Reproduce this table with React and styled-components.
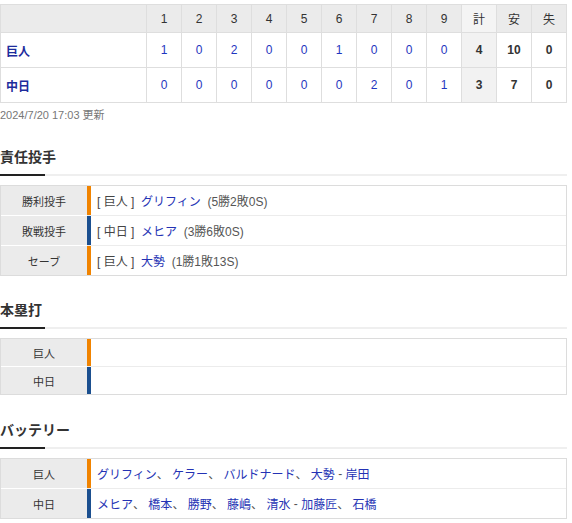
import React from 'react';
import styled, { createGlobalStyle } from 'styled-components';

const GlobalStyle = createGlobalStyle`
  body {
    margin: 0;
    background: #fff;
    font-family: "Liberation Sans", Arial, "Noto Sans CJK JP", sans-serif;
    color: #333;
  }
`;

const Page = styled.div`
  width: 567px;
  padding-top: 4px;
`;

const Score = styled.table`
  width: 567px;
  border-collapse: collapse;
  table-layout: fixed;
  font-size: 12px;
`;

const HeadCell = styled.th`
  height: 27px;
  padding: 0;
  border: 1px solid #dedede;
  background: ${(p) => (p.total ? '#f4f4f4' : '#ebebeb')};
  font-weight: normal;
  color: #333;
  text-align: center;
  width: ${(p) => (p.wide ? '145px' : 'auto')};
`;

const TeamCell = styled.td`
  height: 34px;
  padding: 0 0 0 5px;
  border: 1px solid #dedede;
  font-weight: bold;
  color: #1d2c9c;
`;

const RunCell = styled.td`
  padding: 0;
  border: 1px solid #dedede;
  text-align: center;
  color: #1f35c0;
`;

const TotalCell = styled.td`
  padding: 0;
  border: 1px solid #dedede;
  text-align: center;
  font-weight: bold;
  color: #333;
  background: ${(p) => (p.total ? '#f2f2f2' : '#fff')};
`;

const Stamp = styled.div`
  margin-top: 4px;
  font-size: 11px;
  line-height: 16px;
  color: #777;
`;

const Heading = styled.h2`
  position: relative;
  margin: ${(p) => p.space || 24}px 0 9px;
  padding-bottom: 7px;
  font-size: 14px;
  line-height: 20px;
  font-weight: bold;
  color: #333;
  border-bottom: 2px solid #efefef;
  &::after {
    content: '';
    position: absolute;
    left: 0;
    bottom: -2px;
    width: 45px;
    height: 2px;
    background: #222;
  }
`;

const Box = styled.div`
  border: 1px solid #dcdcdc;
`;

const Row = styled.div`
  display: flex;
  height: ${(p) => p.h || 29}px;
`;

const Label = styled.div`
  width: 86px;
  flex: none;
  display: flex;
  align-items: center;
  justify-content: center;
  background: #ebebeb;
  font-size: 11px;
  color: #333;
`;

const Value = styled.div`
  flex: 1;
  display: flex;
  align-items: center;
  padding-left: 6px;
  border-left: 4px solid ${(p) => p.color};
  font-size: 12px;
  color: #555;
  white-space: pre;
`;

const Divider = styled.div`
  height: 1px;
  background: #ececec;
  margin-left: 86px;
`;

const Name = styled.span`
  color: #2432b4;
`;

const Team = styled.span`
  color: #444;
`;

const Stat = styled.span`
  color: #555;
`;

const ORANGE = '#f08300';
const BLUE = '#1b4f8f';

const scores = [
  { team: '巨人', runs: [1, 0, 2, 0, 0, 1, 0, 0, 0], r: 4, h: 10, e: 0 },
  { team: '中日', runs: [0, 0, 0, 0, 0, 0, 2, 0, 1], r: 3, h: 7, e: 0 },
];

const pitchers = [
  { label: '勝利投手', team: '巨人', name: 'グリフィン', stat: '(5勝2敗0S)', color: ORANGE },
  { label: '敗戦投手', team: '中日', name: 'メヒア', stat: '(3勝6敗0S)', color: BLUE },
  { label: 'セーブ', team: '巨人', name: '大勢', stat: '(1勝1敗13S)', color: ORANGE },
];

const battery = [
  { team: '巨人', pitchers: ['グリフィン', 'ケラー', 'バルドナード', '大勢'], catchers: ['岸田'], color: ORANGE },
  { team: '中日', pitchers: ['メヒア', '橋本', '勝野', '藤嶋', '清水'], catchers: ['加藤匠', '石橋'], color: BLUE },
];

const NameList = ({ names }) => names.map((n, i) => (
  <React.Fragment key={n}>
    {i > 0 && <Stat>{'、 '}</Stat>}
    <Name>{n}</Name>
  </React.Fragment>
));

const App = () => (
  <Page>
    <GlobalStyle />
    <Score>
      <thead>
        <tr>
          <HeadCell wide />
          {[1, 2, 3, 4, 5, 6, 7, 8, 9].map((n) => <HeadCell key={n}>{n}</HeadCell>)}
          <HeadCell total>計</HeadCell>
          <HeadCell>安</HeadCell>
          <HeadCell>失</HeadCell>
        </tr>
      </thead>
      <tbody>
        {scores.map((s) => (
          <tr key={s.team}>
            <TeamCell>{s.team}</TeamCell>
            {s.runs.map((r, i) => <RunCell key={i}>{r}</RunCell>)}
            <TotalCell total>{s.r}</TotalCell>
            <TotalCell>{s.h}</TotalCell>
            <TotalCell>{s.e}</TotalCell>
          </tr>
        ))}
      </tbody>
    </Score>
    <Stamp>2024/7/20 17:03 更新</Stamp>

    <Heading>責任投手</Heading>
    <Box>
      {pitchers.map((p, i) => (
        <React.Fragment key={p.label}>
          {i > 0 && <Divider />}
          <Row>
            <Label>{p.label}</Label>
            <Value color={p.color}>
              <Team>{`[ ${p.team} ]  `}</Team>
              <Name>{p.name}</Name>
              <Stat>{`  ${p.stat}`}</Stat>
            </Value>
          </Row>
        </React.Fragment>
      ))}
    </Box>

    <Heading>本塁打</Heading>
    <Box>
      <Row h={27}>
        <Label>巨人</Label>
        <Value color={ORANGE} />
      </Row>
      <Divider />
      <Row h={27}>
        <Label>中日</Label>
        <Value color={BLUE} />
      </Row>
    </Box>

    <Heading space={25}>バッテリー</Heading>
    <Box>
      {battery.map((b, i) => (
        <React.Fragment key={b.team}>
          {i > 0 && <Divider />}
          <Row>
            <Label>{b.team}</Label>
            <Value color={b.color}>
              <NameList names={b.pitchers} />
              <Stat>{' - '}</Stat>
              <NameList names={b.catchers} />
            </Value>
          </Row>
        </React.Fragment>
      ))}
    </Box>
  </Page>
);

export default App;
